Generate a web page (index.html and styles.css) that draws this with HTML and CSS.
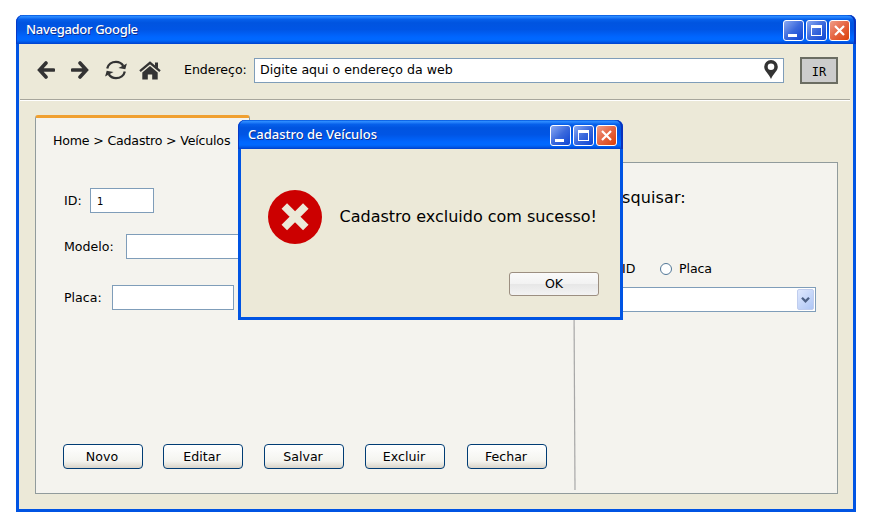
FILE: index.html
```html
<!DOCTYPE html>
<html lang="pt-BR">
<head>
<meta charset="utf-8">
<title>Navegador Google</title>
<link rel="stylesheet" href="styles.css">
</head>
<body>
<main class="window browser">
  <header class="titlebar">
    <h1 class="title browser-title">Navegador Google</h1>
    <div class="controls">
      <svg class="ctl" viewBox="0 0 21 21"><rect class="ctl-blue" x=".5" y=".5" width="20" height="20" rx="2.5"/><path d="M5 14h9v3H5z" fill="#fff"/></svg>
      <svg class="ctl" viewBox="0 0 21 21"><rect class="ctl-blue" x=".5" y=".5" width="20" height="20" rx="2.5"/><path d="M5 5h11v11H5zM6 8v7h9V8z" fill="#fff" fill-rule="evenodd"/></svg>
      <svg class="ctl" viewBox="0 0 21 21"><rect class="ctl-red" x=".5" y=".5" width="20" height="20" rx="2.5"/><path d="M6 6l9 9M15 6l-9 9" stroke="#fff" stroke-width="2.2"/></svg>
    </div>
  </header>
  <nav class="toolbar">
    <svg class="nav-icon back" viewBox="0 0 18 18"><path d="M9 2L2.600 9l6.400 7M3 9h13.500" fill="none" stroke="#333" stroke-width="3.600" stroke-linecap="round"/></svg>
    <svg class="nav-icon forward" viewBox="0 0 18 18"><path d="M9 2l6.400 7L9 16M15 9H1.500" fill="none" stroke="#333" stroke-width="3.600" stroke-linecap="round"/></svg>
    <svg class="refresh" viewBox="0 0 22 20"><g fill="none" stroke="#333" stroke-width="2.300"><path d="M2.200 8.500C3 4.500 6.700 1.800 11 1.800c3.200 0 5.700 1.400 7.300 4"/><path d="M19.800 11.500c-.8 4-4.500 6.700-8.800 6.700-3.200 0-5.700-1.400-7.300-4"/></g><path d="M21.900 3.500L20.300 9.300 13.500 8zM.1 16.500L1.700 10.700 8.500 12z" fill="#333"/></svg>
    <svg class="home" viewBox="0 0 22 19"><path d="M1 10.200L11 1.800l10 8.400" fill="none" stroke="#333" stroke-width="2.200"/><path d="M16 1.500h3v6l-3-2.700zM11 4.900l7.700 6.500V18.500H13.200v-5H8.800v5H3.300v-7.100z" fill="#333"/></svg>
    <label class="address-label">Endereço:</label>
    <div class="field address"><span>Digite aqui o endereço da web</span>
      <svg class="pin" viewBox="0 0 14 19"><path d="M7 0a6.800 6.800 0 0 0-6.800 6.800C.2 11 4.500 13.500 7 19c2.500-5.500 6.800-8 6.800-12.200A6.800 6.800 0 0 0 7 0zm0 3.500a3.300 3.300 0 1 1 0 6.600 3.300 3.300 0 0 1 0-6.600z" fill="#333" fill-rule="evenodd"/></svg>
    </div>
    <button class="go">IR</button>
  </nav>
  <div class="rule"></div>
  <div class="tab"><span>Home &gt; Cadastro &gt; Veículos</span></div>
  <section class="panel">
    <div class="record">
      <div class="row id-row"><label class="id-label">ID:</label><div class="field id-field">1</div></div>
      <div class="row model-row"><label class="model-label">Modelo:</label><div class="field model-field"></div></div>
      <div class="row plate-row"><label class="plate-label">Placa:</label><div class="field plate-field"></div></div>
      <div class="actions">
        <button class="action">Novo</button>
        <button class="action">Editar</button>
        <button class="action">Salvar</button>
        <button class="action">Excluir</button>
        <button class="action">Fechar</button>
      </div>
    </div>
    <svg class="divider" viewBox="0 0 4 316"><path d="M1.300 0L3 316" stroke="#a7a7a7" stroke-width="1.200"/></svg>
    <div class="search">
      <h2 class="search-title">Pesquisar:</h2>
      <div class="options">
        <span class="radio"></span><span class="option-id">ID</span>
        <span class="radio"></span><span class="option-plate">Placa</span>
      </div>
      <div class="field select"><svg class="arrow" viewBox="0 0 17 21"><path d="M4.500 8.500l4 4 4-4" fill="none" stroke="#4d6185" stroke-width="2.600"/></svg></div>
    </div>
  </section>
</main>

<section class="window dialog">
  <header class="titlebar">
    <h1 class="title dialog-title">Cadastro de Veículos</h1>
    <div class="controls">
      <svg class="ctl" viewBox="0 0 21 21"><rect class="ctl-blue" x=".5" y=".5" width="20" height="20" rx="2.5"/><path d="M5 14h9v3H5z" fill="#fff"/></svg>
      <svg class="ctl" viewBox="0 0 21 21"><rect class="ctl-blue" x=".5" y=".5" width="20" height="20" rx="2.5"/><path d="M5 5h11v11H5zM6 8v7h9V8z" fill="#fff" fill-rule="evenodd"/></svg>
      <svg class="ctl" viewBox="0 0 21 21"><rect class="ctl-red" x=".5" y=".5" width="20" height="20" rx="2.5"/><path d="M6 6l9 9M15 6l-9 9" stroke="#fff" stroke-width="2.2"/></svg>
    </div>
  </header>
  <div class="message">
    <svg class="error" viewBox="0 0 54 54"><circle cx="27" cy="27" r="27" fill="#c00"/><path d="M16.300 16l21.500 21.500M37.800 16L16.300 37.500" stroke="#ece9d8" stroke-width="7.800" stroke-linecap="butt"/></svg>
    <p class="message-text">Cadastro excluido com sucesso!</p>
  </div>
  <button class="ok">OK</button>
</section>

<svg class="defs" width="0" height="0"><defs>
  <linearGradient id="blue" x1="0" y1="0" x2="1" y2="1"><stop offset="0" stop-color="#8fadf3"/><stop offset=".5" stop-color="#3b69dc"/><stop offset="1" stop-color="#0b43d4"/></linearGradient>
  <linearGradient id="red" x1="0" y1="0" x2="1" y2="1"><stop offset="0" stop-color="#f0a08c"/><stop offset=".5" stop-color="#e56543"/><stop offset="1" stop-color="#dc3d04"/></linearGradient>
</defs></svg>
</body>
</html>
```
FILE: styles.css
```css
* { box-sizing: border-box; }
body {
  margin: 0;
  padding: 15px 0 0 16px;
  height: 532px;
  overflow: hidden;
  background: #fff;
  color: #000;
  font: 12.6px/16px "DejaVu Sans", sans-serif;
}
svg { display: block; flex: none; }
button { font: inherit; color: inherit; padding: 0; margin: 0; flex: none; }
h1, h2, p { margin: 0; font-weight: normal; }
span, label, h1, h2, p { white-space: nowrap; }

.window {
  background: #ece9d8;
  border: 3px solid #0054e3;
  border-top: 0;
  border-radius: 7px 7px 0 0;
}
.browser { width: 840px; height: 497px; }
.titlebar {
  height: 29px;
  margin: 0 -3px;
  padding: 0 6px 0 10px;
  display: flex;
  justify-content: space-between;
  border-radius: 7px 7px 0 0;
  background: linear-gradient(#0053db 0, #2b8bff 5%, #2480fa 8%, #0660eb 15%, #0054e0 27%, #0055e5 50%, #0066ff 76%, #0069ff 86%, #005bec 92%, #0040cc 100%);
  box-shadow: inset 1px 0 #0639c8, inset -2px 0 #0832bd;
}
.title {
  font: 500 13px/29px "Noto Sans", sans-serif;
  color: #fff;
  text-shadow: 1px 1px #10308f;
}
.browser-title { letter-spacing: -.3px; }
.dialog-title { letter-spacing: 0; }
.controls { display: flex; gap: 2px; padding-top: 5px; }
.ctl { width: 21px; height: 21px; }
.ctl-blue { fill: url(#blue); stroke: #fff; }
.ctl-red { fill: url(#red); stroke: #fff; }
.defs { position: absolute; }

.toolbar {
  height: 55px;
  padding: 0 15px 3px 18px;
  display: flex;
  align-items: center;
}
.nav-icon { width: 18px; height: 18px; }
.forward { margin-left: 16px; }
.refresh { width: 22px; height: 20px; margin-left: 16px; }
.home { width: 22px; height: 19px; margin-left: 12px; }
.address-label { width: 70px; margin-left: 23px; letter-spacing: -.05px; }
.field {
  height: 25px;
  background: #fff;
  border: 1px solid #7f9db9;
  flex: none;
}
.address {
  width: 530px;
  padding: 0 5px;
  display: flex;
  align-items: center;
  justify-content: space-between;
}
.pin { width: 14px; height: 19px; margin-top: -1px; }
.go {
  width: 38px;
  height: 27px;
  margin-left: 16px;
  border: 2px solid #6b6d62;
  background: #ccc;
  font: 12px/25px "DejaVu Sans Mono", monospace;
  padding-top: 1px;
}
.rule { height: 2px; margin: 0 3px 0 1px; background: linear-gradient(#a7a69c 50%, #fff 50%); }

.tab {
  position: relative;
  width: 215px;
  height: 48px;
  margin: 14px 0 -1px 16px;
  padding: 15px 0 0 17px;
  background: #f4f3ee;
  border: 1px solid #919b9c;
  border-top: 3px solid #f0a030;
  border-bottom: 0;
  border-radius: 3px 3px 0 0;
  letter-spacing: -.19px;
}
.panel {
  width: 803px;
  height: 332px;
  margin-left: 16px;
  display: flex;
  background: #f4f3ee;
  border: 1px solid #919b9c;
}
.record { width: 536px; padding: 25px 0 0 28px; }
.row { display: flex; align-items: center; height: 25px; }
.model-row { margin-top: 21px; }
.plate-row { margin-top: 26px; }
.id-label { width: 26px; }
.model-label { width: 62px; padding-top: 1px; }
.plate-label { width: 48px; }
.id-field { width: 64px; padding-left: 6px; font-size: 10px; line-height: 25px; }
.model-field { width: 300px; }
.plate-field { width: 122px; }
.actions { display: flex; gap: 21px; margin: 134px 0 0 -1px; }
.action {
  width: 80px;
  height: 25px;
  padding-right: 2px;
  border: 1px solid #003c74;
  border-radius: 4px;
  background: linear-gradient(#fff, #f4f4ef 70%, #d9d4c9);
}
.action:first-child { margin-right: -1px; }
.action:last-child { margin-left: 1px; }
.divider { width: 4px; height: 316px; margin-top: 11px; }
.search { padding: 25px 0 0 27px; }
.search-title { font-size: 16px; line-height: 20px; letter-spacing: .1px; }
.options { display: flex; align-items: center; height: 20px; margin-top: 51px; }
.radio {
  width: 12px;
  height: 12px;
  border: 1.5px solid #527797;
  border-radius: 50%;
  background: #fff;
}
.option-id { margin-left: 7px; width: 38px; }
.option-plate { margin-left: 7px; letter-spacing: -.1px; }
.select { width: 213px; margin-top: 8px; padding: 1px; display: flex; justify-content: flex-end; }
.arrow { width: 17px; height: 21px; border-radius: 2px; background: linear-gradient(135deg, #dfe8fd, #aec6f5); border: 1px solid #c0cdee; }

.dialog { position: absolute; left: 238px; top: 120px; width: 385px; height: 200px; }
.message { display: flex; align-items: center; height: 54px; margin: 41px 0 0 26.5px; }
.error { width: 54px; height: 54px; margin-top: -1px; }
.message-text { margin-left: 18px; font-size: 16px; line-height: 20px; }
.ok {
  display: block;
  width: 90px;
  height: 24px;
  margin: 28px 0 0 268px;
  border: 1px solid #9c8f81;
  border-radius: 3px;
  background: linear-gradient(#fafafa, #f2f2f2 50%, #e7e7e7 52%, #f3f3f3);
}
```
